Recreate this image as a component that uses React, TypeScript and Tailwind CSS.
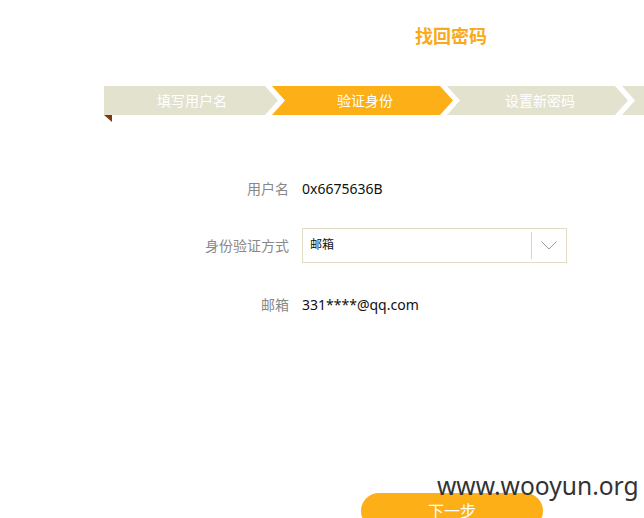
import React from "react";

const font = { fontFamily: '"Noto Sans", "Noto Sans CJK SC", sans-serif' };

function Step({
  label,
  active,
  first,
}: {
  label: string;
  active?: boolean;
  first?: boolean;
}) {
  return (
    <div
      className={
        "h-[29px] shrink-0 flex items-center justify-center text-[14px] text-white " +
        (active ? "bg-[#fcaf17] " : "bg-[#e3e2cf] ") +
        (first
          ? "w-[174px] pl-[2px] [clip-path:polygon(0_0,161px_0,174px_50%,161px_100%,0_100%)]"
          : "w-[181px] -ml-[6px] pl-[5px] [clip-path:polygon(0_0,168px_0,181px_50%,168px_100%,0_100%,13px_50%)]")
      }
    >
      {label}
    </div>
  );
}

export default function App() {
  return (
    <div className="relative w-[644px] h-[518px] overflow-hidden bg-white" style={font}>
      <div className="ml-[104px] w-[694px]">
        <div className="pt-[23px] h-[49px] text-center text-[18px] leading-[26px] font-bold text-[#f9a91a]">
          找回密码
        </div>
        <div className="mt-[37px] flex">
          <Step label="填写用户名" first />
          <Step label="验证身份" active />
          <Step label="设置新密码" />
          <Step label="" />
        </div>
        <div className="w-[8px] h-[7px] bg-[#7b3a0e] [clip-path:polygon(0_0,100%_0,100%_100%)]" />

        <div className="mt-[48px] flex items-center h-[36px]">
          <div className="w-[185px] text-right text-[14px] text-[#888888]">用户名</div>
          <div className="ml-[13px] text-[14px] text-[#111111]">0x6675636B</div>
        </div>

        <div className="mt-[21px] flex items-center h-[36px]">
          <div className="w-[185px] text-right text-[14px] text-[#888888]">身份验证方式</div>
          <div className="ml-[13px] w-[265px] h-[35px] border border-[#e2dcc6] flex items-center">
            <div className="flex-1 pl-[7px] text-[12px] text-[#111111]">邮箱</div>
            <div className="w-px h-[27px] bg-[#d6d6d6]" />
            <div className="w-[34px] flex items-center justify-center">
              <svg width="16" height="9" viewBox="0 0 16 9">
                <polyline points="0.5,0.5 8,8 15.5,0.5" fill="none" stroke="#9a9a9a" strokeWidth="1" />
              </svg>
            </div>
          </div>
        </div>

        <div className="mt-[23px] flex items-center h-[36px]">
          <div className="w-[185px] text-right text-[14px] text-[#888888]">邮箱</div>
          <div className="ml-[13px] text-[14px] text-[#111111]">331****@qq.com</div>
        </div>

        <div className="mt-[171px] ml-[257px] w-[182px] h-[36px] rounded-full bg-[#fcaf17] flex items-center justify-center text-[16px] text-white">
          下一步
        </div>
      </div>

      <div className="absolute left-[437px] top-[469px] text-[24.6px] leading-[34px] text-[#333333]">
        www.wooyun.org
      </div>
    </div>
  );
}
